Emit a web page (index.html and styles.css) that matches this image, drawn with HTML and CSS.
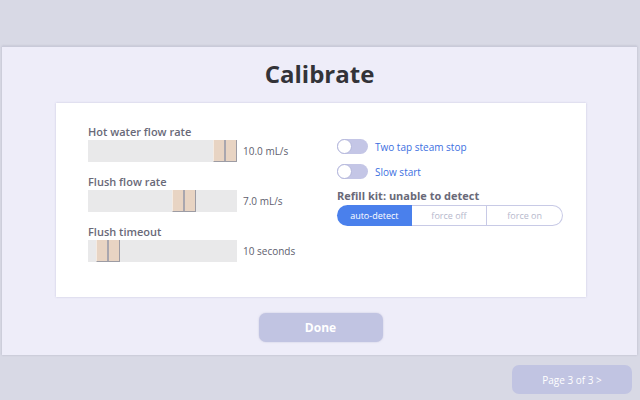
FILE: index.html
```html
<!DOCTYPE html>
<html>
<head>
<meta charset="utf-8">
<link rel="stylesheet" href="styles.css">
</head>
<body>
<div class="screen">
  <div class="panel">
    <h1 class="title">Calibrate</h1>
    <div class="card">
      <div class="col-left">
        <div class="slider-row">
          <div class="label">Hot water flow rate</div>
          <div class="slider-line">
            <div class="track"><div class="thumb" style="margin-left:125px"><span class="half"></span><span class="half"></span></div></div>
            <span class="value">10.0 mL/s</span>
          </div>
        </div>
        <div class="slider-row">
          <div class="label">Flush flow rate</div>
          <div class="slider-line">
            <div class="track"><div class="thumb" style="margin-left:84px"><span class="half"></span><span class="half"></span></div></div>
            <span class="value">7.0 mL/s</span>
          </div>
        </div>
        <div class="slider-row">
          <div class="label">Flush timeout</div>
          <div class="slider-line">
            <div class="track"><div class="thumb" style="margin-left:8px"><span class="half"></span><span class="half"></span></div></div>
            <span class="value">10 seconds</span>
          </div>
        </div>
      </div>
      <div class="col-right">
        <div class="toggle-row"><span class="toggle"><span class="knob"></span></span><span class="toggle-text">Two tap steam stop</span></div>
        <div class="toggle-row"><span class="toggle"><span class="knob"></span></span><span class="toggle-text">Slow start</span></div>
        <div class="label refill">Refill kit: unable to detect</div>
        <div class="segmented">
          <span class="seg active">auto-detect</span>
          <span class="seg">force off</span>
          <span class="seg last">force on</span>
        </div>
      </div>
    </div>
    <div class="done-wrap"><button class="done">Done</button></div>
  </div>
  <div class="footer"><button class="page">Page 3 of 3 &gt;</button></div>
</div>
</body>
</html>
```
FILE: styles.css
```css
* { box-sizing: border-box; }
html, body { margin: 0; padding: 0; }
body {
  width: 640px;
  height: 400px;
  background: #d8d9e5;
  font-family: "Open Sans", "Noto Sans", sans-serif;
  overflow: hidden;
}
.screen {
  padding-top: 46px;
}
.panel {
  margin: 0 3px 0 2px;
  height: 309px;
  background: #eeedf9;
  border-top: 1px solid #c9cad9;
  box-shadow: 0 0 2px rgba(120, 120, 150, 0.35);
  padding-top: 11px;
}
.title {
  margin: 0;
  text-align: center;
  font-size: 24px;
  line-height: 32px;
  font-weight: 700;
  color: #333338;
}
.card {
  margin: 13px 0 0 54px;
  width: 530px;
  height: 194px;
  background: #ffffff;
  box-shadow: 0 0 2px rgba(150, 150, 190, 0.45);
  padding: 22px 0 0 32px;
  display: flex;
}
.col-left {
  width: 249px;
  display: flex;
  flex-direction: column;
  gap: 13px;
}
.label {
  font-size: 11px;
  line-height: 14px;
  font-weight: 600;
  color: #696978;
  margin-bottom: 1px;
}
.slider-line {
  display: flex;
  align-items: center;
  gap: 6px;
}
.track {
  width: 149px;
  height: 22px;
  background: #e9e9ea;
  display: flex;
}
.thumb {
  width: 24px;
  height: 22px;
  display: flex;
  border-right: 1px solid #9d9ca4;
  border-bottom: 1px solid #9d9ca4;
  border-left: 1px solid #f4ebe3;
}
.half {
  flex: 1;
  background: #e8d4c3;
}
.half + .half {
  border-left: 2px solid #a9a6ae;
}
.value {
  font-size: 10px;
  line-height: 14px;
  color: #5e5e6e;
}
.col-right {
  margin-top: 14px;
  display: flex;
  flex-direction: column;
}
.toggle-row {
  display: flex;
  align-items: center;
  gap: 7px;
  height: 15px;
  margin-bottom: 10px;
}
.toggle {
  width: 31px;
  height: 15px;
  border-radius: 8px;
  background: #c4c6e6;
  display: flex;
}
.knob {
  width: 15px;
  height: 15px;
  border-radius: 50%;
  background: #ffffff;
  border: 1px solid #b3b6db;
}
.toggle-text {
  font-size: 10px;
  line-height: 14px;
  color: #3d6fdf;
}
.refill {
  margin-bottom: 2px;
  font-weight: 700;
}
.segmented {
  display: flex;
  width: 226px;
  height: 21px;
}
.seg {
  flex: 1;
  display: flex;
  align-items: center;
  justify-content: center;
  font-size: 9px;
  color: #b6b8cc;
  background: #ffffff;
  border: 1px solid #c8cae6;
  border-left: none;
}
.seg.active {
  background: #4a80ec;
  color: #ffffff;
  border: none;
  border-radius: 11px 0 0 11px;
}
.seg.last {
  border-radius: 0 11px 11px 0;
}
.done-wrap {
  display: flex;
  justify-content: center;
  padding-top: 16px;
  padding-left: 2px;
}
.done {
  width: 124px;
  height: 29px;
  border: none;
  border-radius: 7px;
  background: #c1c4e2;
  box-shadow: 0 0 2px rgba(140, 140, 180, 0.4);
  color: #ffffff;
  font-family: "Open Sans", "Noto Sans", sans-serif;
  font-weight: 700;
  font-size: 12px;
}
.footer {
  display: flex;
  justify-content: flex-end;
  padding: 10px 8px 0 0;
}
.page {
  width: 120px;
  height: 29px;
  border: none;
  border-radius: 7px;
  background: #c1c4e2;
  color: #ffffff;
  font-family: "Open Sans", "Noto Sans", sans-serif;
  font-size: 10px;
}
```
